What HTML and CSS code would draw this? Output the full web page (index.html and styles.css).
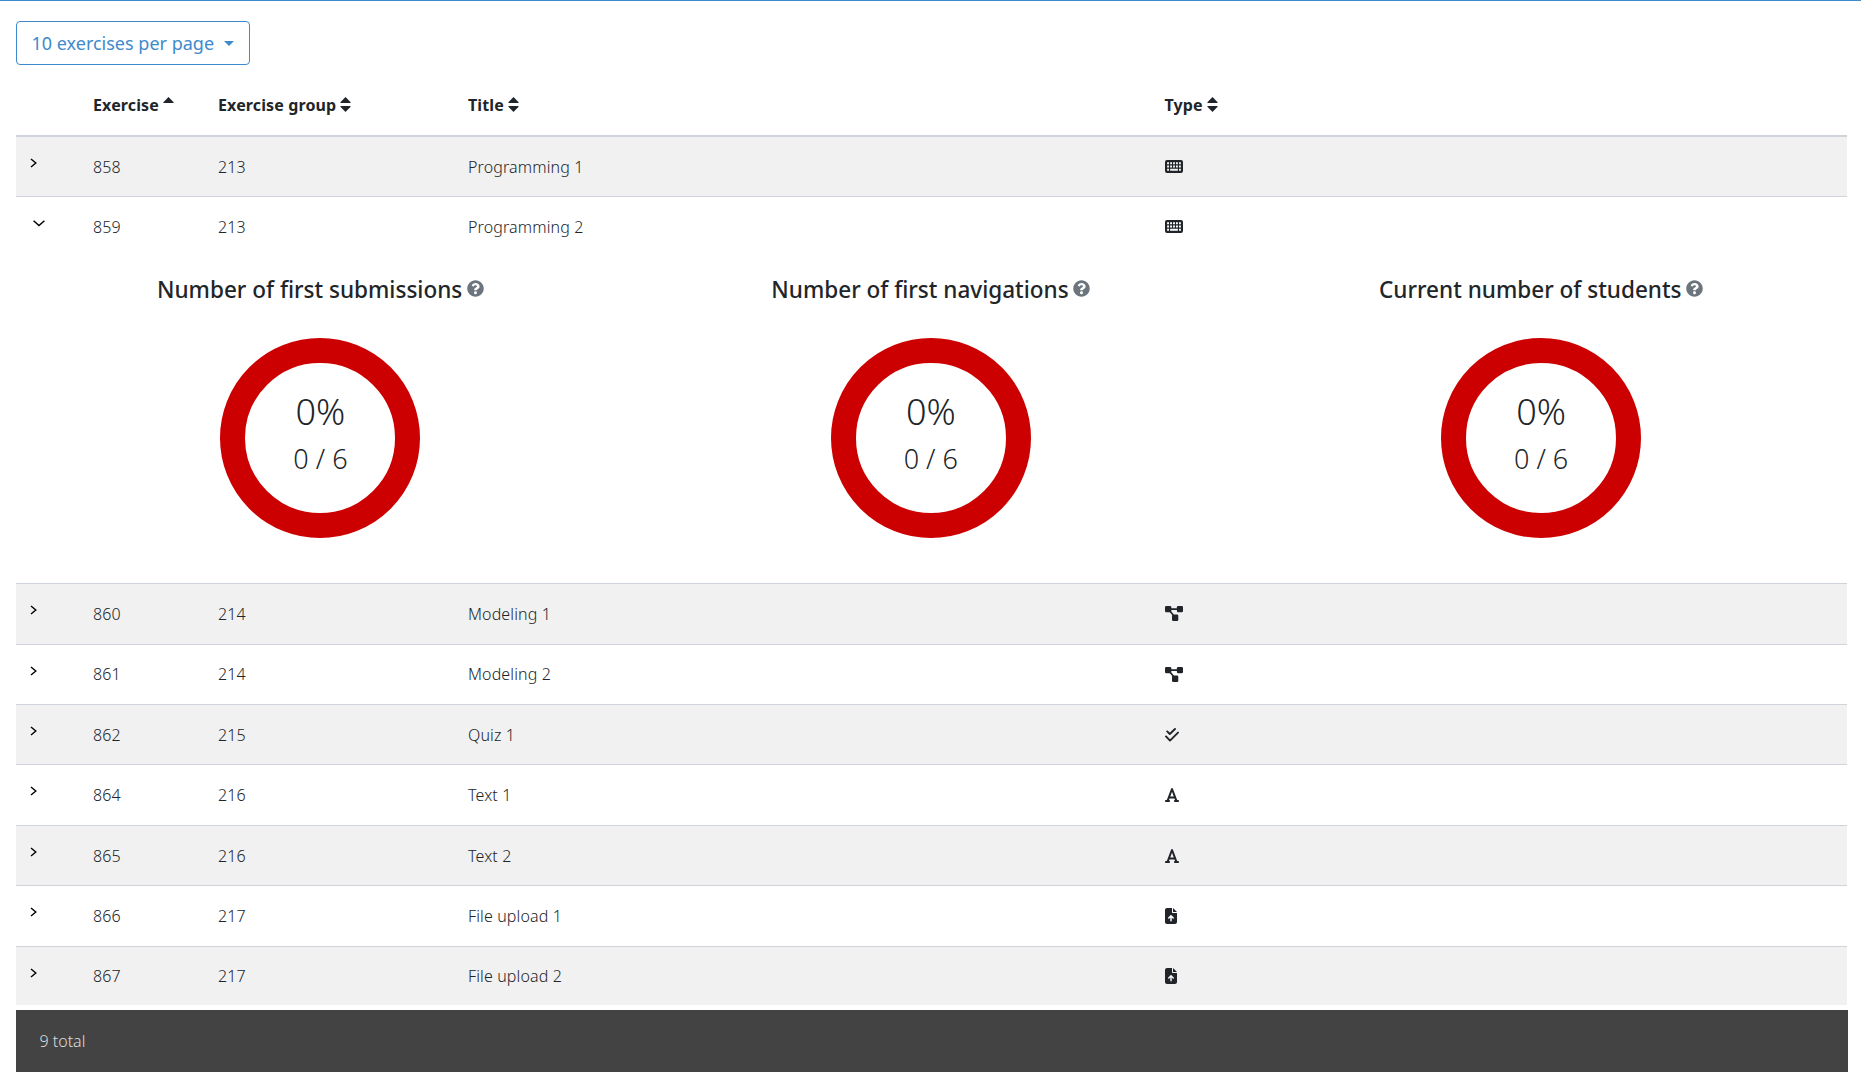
FILE: index.html
```html
<!DOCTYPE html>
<html lang="en">
<head>
<meta charset="utf-8">
<title>Exercises</title>
<link rel="stylesheet" href="styles.css">
</head>
<body>
<svg class="defs" aria-hidden="true">
  <symbol id="keyboard" viewBox="0 0 18 13"><path fill-rule="evenodd" d="M2 0h14q2 0 2 2v9q0 2-2 2H2q-2 0-2-2V2q0-2 2-2zM2.100 2.300v2h1.900v-2zM5.100 2.300v2h1.900v-2zM8.050 2.300v2h1.900v-2zM11 2.300v2h1.900v-2zM14 2.300v2h1.900v-2zM2.100 5.500v1.900h1.900v-1.900zM5.100 5.500v1.900h1.900v-1.900zM8.050 5.500v1.900h1.900v-1.900zM11 5.500v1.900h1.900v-1.900zM14 5.500v1.900h1.900v-1.900zM2.100 8.800v1.900h1.900v-1.900zM5.100 8.800v1.900h7.800v-1.900zM14 8.800v1.900h1.900v-1.900z"/></symbol>
  <symbol id="diagram" viewBox="0 0 18 15"><rect width="6.300" height="6.300" rx="1.200"/><rect x="11.900" width="6.100" height="6.300" rx="1.200"/><rect x="7" y="8.600" width="6.300" height="6.300" rx="1.200"/><path d="M5 3.200h8M4.500 4.500l4.500 5.500" stroke="currentColor" stroke-width="1.700"/></symbol>
  <symbol id="checks" viewBox="0 0 14 14"><path d="M2.200 3.400 4.800 6 10 1M1 8.400l4 4.200 8-8" fill="none" stroke="currentColor" stroke-width="1.900" stroke-linecap="round" stroke-linejoin="round"/></symbol>
  <symbol id="font" viewBox="0 0 448 512"><path d="M254 52.800C249.300 40.300 237.300 32 224 32s-25.300 8.300-30 20.800L57.800 416H32c-17.700 0-32 14.300-32 32s14.300 32 32 32h96c17.700 0 32-14.300 32-32s-14.300-32-32-32h-1.800l18-48H303.800l18 48H320c-17.700 0-32 14.300-32 32s14.300 32 32 32h96c17.700 0 32-14.300 32-32s-14.300-32-32-32H390.200L254 52.800zM279.800 304H168.200L224 155.100 279.800 304z"/></symbol>
  <symbol id="upload" viewBox="0 0 384 512"><path d="M64 0C28.700 0 0 28.700 0 64V448c0 35.300 28.700 64 64 64H320c35.300 0 64-28.700 64-64V160H256c-17.700 0-32-14.300-32-32V0H64zM256 0V128H384L256 0zM216 408c0 13.300-10.700 24-24 24s-24-10.700-24-24V305.900l-31 31c-9.400 9.400-24.600 9.400-33.900 0s-9.400-24.600 0-33.900l72-72c9.400-9.400 24.600-9.400 33.900 0l72 72c9.400 9.400 9.400 24.600 0 33.900s-24.600 9.400-33.900 0l-31-31V408z"/></symbol>
  <symbol id="help" viewBox="0 0 512 512"><path d="M504 256c0 136.997-111.043 248-248 248S8 392.997 8 256C8 119.083 119.043 8 256 8s248 111.083 248 248zM262.655 90c-54.497 0-89.255 22.957-116.549 63.758-3.536 5.286-2.353 12.415 2.715 16.258l34.699 26.310c5.205 3.947 12.621 3.008 16.665-2.122 17.864-22.658 30.113-35.797 57.303-35.797 20.429 0 45.698 13.148 45.698 32.958 0 14.976-12.363 22.667-32.534 33.976C247.128 238.528 216 254.941 216 296v4c0 6.627 5.373 12 12 12h56c6.627 0 12-5.373 12-12v-1.333c0-28.462 83.186-29.647 83.186-106.667 0-58.002-60.165-102-116.531-102zM256 338c-25.365 0-46 20.635-46 46 0 25.364 20.635 46 46 46s46-20.636 46-46c0-25.365-20.635-46-46-46z"/></symbol>
  <symbol id="sort" viewBox="0 0 11 15"><path d="M5.500 0 10.600 5.200q.4 .8-.5 .8H.9Q0 6 .4 5.200zM5.500 15 10.600 9.800q.4-.8-.5-.8H.9q-.9 0-.5 .8z"/></symbol>
  <symbol id="sort-up" viewBox="0 0 11 15"><path d="M5.500 0 10.600 5.200q.4 .8-.5 .8H.9Q0 6 .4 5.200z"/></symbol>
  <symbol id="right" viewBox="0 0 7 10"><path d="M1 1l4.800 4L1 9" fill="none" stroke="#000" stroke-width="1.400"/></symbol>
  <symbol id="down" viewBox="0 0 12 7"><path d="M.6 .8 6 5.600 11.400 .8" fill="none" stroke="#000" stroke-width="1.500"/></symbol>
</svg>
<main class="page">
  <button class="page-size">10 exercises per page<span class="caret"></span></button>
  <div class="table">
    <div class="row head">
      <span></span>
      <span>Exercise <svg class="sort"><use href="#sort-up"/></svg></span>
      <span>Exercise group <svg class="sort"><use href="#sort"/></svg></span>
      <span>Title <svg class="sort"><use href="#sort"/></svg></span>
      <span>Type <svg class="sort"><use href="#sort"/></svg></span>
    </div>
    <div class="row odd first"><svg class="toggle"><use href="#right"/></svg><span>858</span><span>213</span><span>Programming 1</span><svg class="keyboard"><use href="#keyboard"/></svg></div>
    <div class="row second"><svg class="toggle open"><use href="#down"/></svg><span>859</span><span>213</span><span>Programming 2</span><svg class="keyboard"><use href="#keyboard"/></svg></div>
    <div class="details">
      <section class="stat"><h4>Number of first submissions <svg class="help"><use href="#help"/></svg></h4><div class="ring"><span class="percent">0%</span><span class="count">0 / 6</span></div></section>
      <section class="stat"><h4>Number of first navigations <svg class="help"><use href="#help"/></svg></h4><div class="ring"><span class="percent">0%</span><span class="count">0 / 6</span></div></section>
      <section class="stat"><h4>Current number of students <svg class="help"><use href="#help"/></svg></h4><div class="ring"><span class="percent">0%</span><span class="count">0 / 6</span></div></section>
    </div>
    <div class="row odd"><svg class="toggle"><use href="#right"/></svg><span>860</span><span>214</span><span>Modeling 1</span><svg class="diagram"><use href="#diagram"/></svg></div>
    <div class="row"><svg class="toggle"><use href="#right"/></svg><span>861</span><span>214</span><span>Modeling 2</span><svg class="diagram"><use href="#diagram"/></svg></div>
    <div class="row odd"><svg class="toggle"><use href="#right"/></svg><span>862</span><span>215</span><span>Quiz 1</span><svg class="checks"><use href="#checks"/></svg></div>
    <div class="row"><svg class="toggle"><use href="#right"/></svg><span>864</span><span>216</span><span>Text 1</span><svg class="font"><use href="#font"/></svg></div>
    <div class="row odd"><svg class="toggle"><use href="#right"/></svg><span>865</span><span>216</span><span>Text 2</span><svg class="font"><use href="#font"/></svg></div>
    <div class="row"><svg class="toggle"><use href="#right"/></svg><span>866</span><span>217</span><span>File upload 1</span><svg class="upload"><use href="#upload"/></svg></div>
    <div class="row odd last"><svg class="toggle"><use href="#right"/></svg><span>867</span><span>217</span><span>File upload 2</span><svg class="upload"><use href="#upload"/></svg></div>
  </div>
  <footer class="total">9 total</footer>
</main>
</body>
</html>
```
FILE: styles.css
```css
* { box-sizing: border-box; }
body { margin: 0; background: #fff; color: #212529; font-family: "Noto Sans", sans-serif; font-size: 16px; line-height: 24px; }
svg { fill: currentColor; overflow: visible; }
.defs { display: none; }
.page { height: 1072px; overflow: hidden; border-top: 1px solid #3e8acc; padding: 20px 13px 0 16px; }
.page-size { display: flex; align-items: center; width: 234px; height: 44px; padding: 0 14.500px; border: 1px solid #3e8acc; border-radius: 4px; background: #fff; color: #3e8acc; font: 400 18px/28px "Noto Sans", sans-serif; white-space: nowrap; }
.caret { margin-left: 10px; border: 5px solid transparent; border-top-color: #3e8acc; border-bottom: 0; }
.table { width: 1831px; }
.row { display: grid; grid-template-columns: 77px 125px 250px 696.500px 1fr; align-items: center; height: 60.400px; border-top: 1px solid #ced4da; font-weight: 300; letter-spacing: .13px; }
.head { height: 72px; border-top: 0; border-bottom: 2px solid #ced4da; font-weight: 700; padding-top: 10px; }
.odd { background: #f1f1f1; }
.first { height: 59px; border-top: 0; }
.second { height: 60px; }
.last { height: 59.300px; }
.toggle { align-self: start; width: 7px; height: 10px; margin: 21px 0 0 13.500px; }
.toggle.open { width: 12px; height: 7px; margin: 23px 0 0 16.500px; }
.sort { width: 11px; height: 15px; margin-left: -.5px; vertical-align: -1px; }
.keyboard { width: 18px; height: 13px; }
.diagram { width: 18px; height: 15px; }
.checks { width: 14px; height: 14px; }
.font { width: 14px; height: 16px; }
.upload { width: 12px; height: 16px; }
.details { display: grid; grid-template-columns: repeat(3, 1fr); width: 1831px; height: 327.300px; margin-left: -.7px; padding-top: 18px; }
.stat { display: flex; flex-direction: column; align-items: center; }
h4 { margin: 0 0 33px; font-size: 22.540px; font-weight: 500; line-height: 31px; }
.help { width: 17px; height: 17px; margin-left: -1.200px; color: #6c757d; vertical-align: 1.500px; }
.ring { display: flex; flex-direction: column; align-items: center; width: 200px; height: 200px; padding-top: 29px; border: 25px solid #c00; border-radius: 50%; font-weight: 300; white-space: nowrap; }
.percent { font-size: 36px; line-height: 40px; }
.count { margin-top: 7px; font-size: 27px; line-height: 40px; }
.total { width: 1832px; height: 62px; margin-top: 5px; padding: 19px 23.500px; background: #434343; color: #dcdcdc; font-weight: 300; }
```
